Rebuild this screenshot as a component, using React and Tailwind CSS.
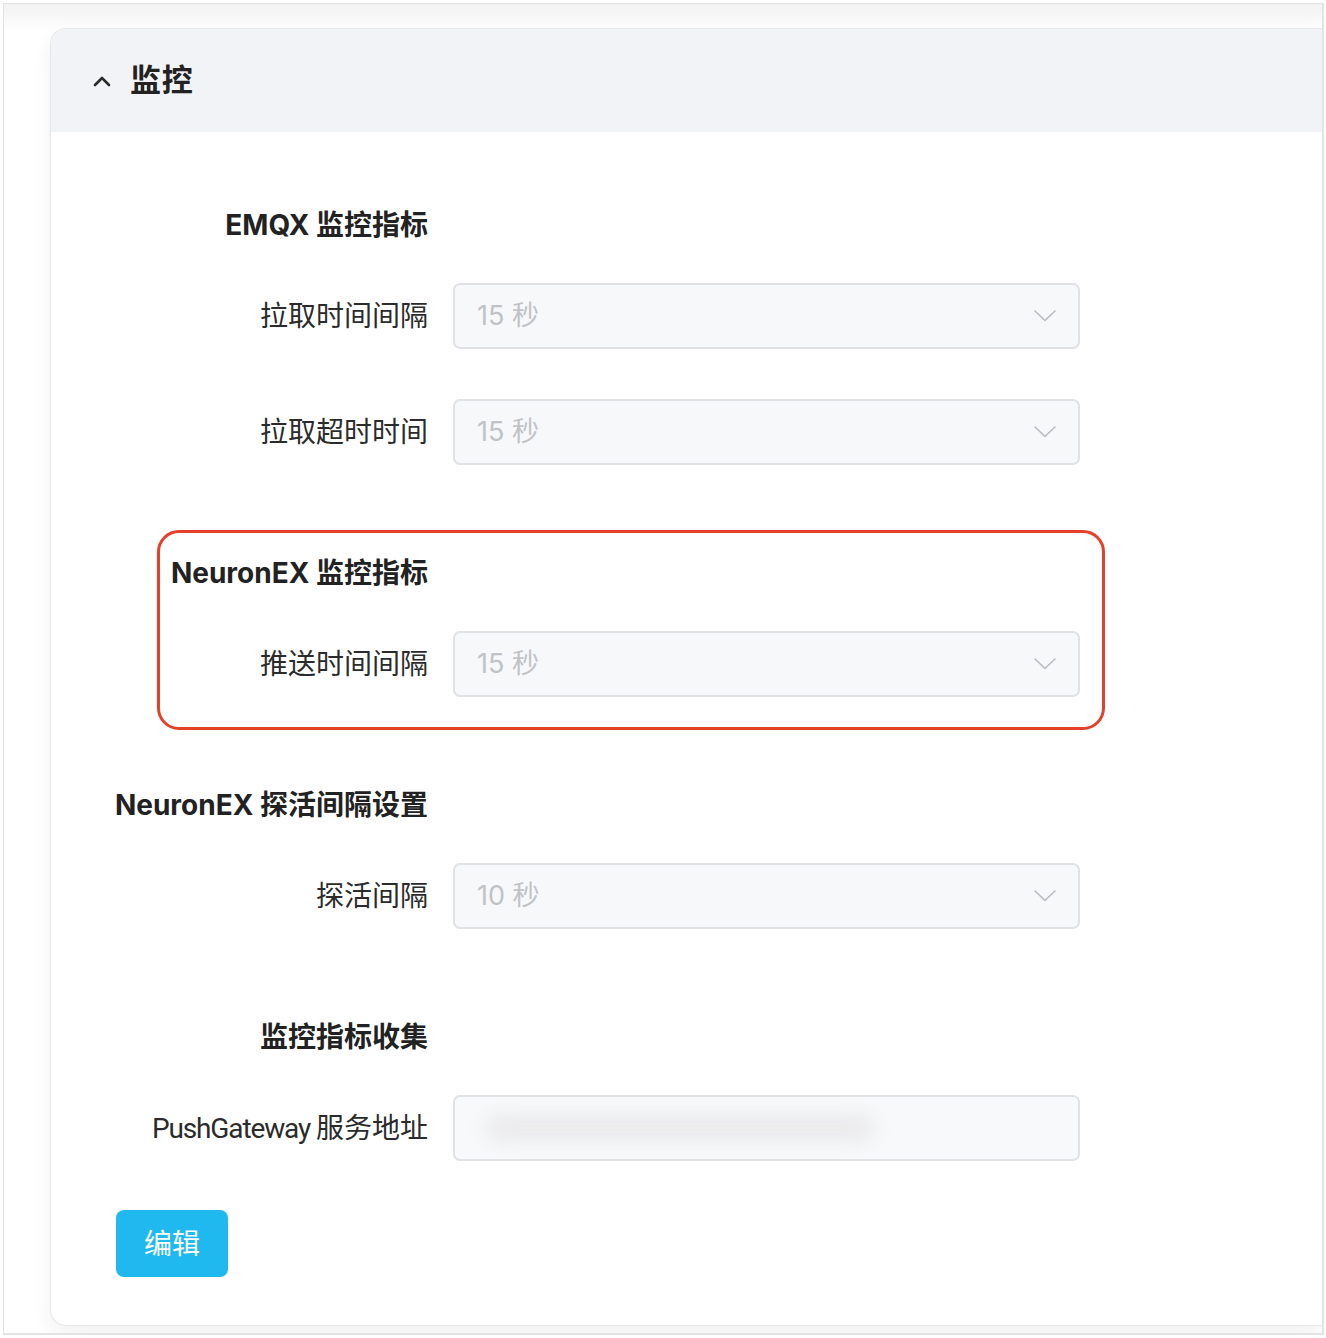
import { useState } from "react";

const FONT = { fontFamily: 'Inter, "Noto Sans CJK SC", sans-serif' };

function ChevronDown() {
  return (
    <svg width="22" height="12" viewBox="0 0 22 12" fill="none">
      <polyline points="1,1 11,10.5 21,1" stroke="#b9bcc2" strokeWidth="1.6" strokeLinejoin="round" strokeLinecap="round" />
    </svg>
  );
}

function ChevronUp() {
  return (
    <svg width="18" height="12" viewBox="0 0 18 12" fill="none">
      <polyline points="2,10 9,3 16,10" stroke="#2a2a2a" strokeWidth="2.6" strokeLinejoin="round" strokeLinecap="round" />
    </svg>
  );
}

function Heading({ children, className = "" }) {
  return (
    <div className={`flex ${className}`}>
      <div className="w-[312px] flex justify-end whitespace-nowrap text-[28px] leading-[40px] font-bold text-[#222]">
        <span>{children}</span>
      </div>
    </div>
  );
}

function SelectRow({ label, value, className = "" }) {
  return (
    <div className={`flex items-center gap-[25px] ${className}`}>
      <div className="w-[312px] flex justify-end whitespace-nowrap text-[28px] text-[#2b2b2b]">
        <span>{label}</span>
      </div>
      <div className="w-[627px] h-[66px] rounded-[7px] border-2 border-[#e1e2e6] bg-[#f7f8fa] flex items-center justify-between pl-[22px] pr-[22px]">
        <span className="text-[27px] text-[#c0c2c6]">{value}</span>
        <ChevronDown />
      </div>
    </div>
  );
}

export default function App() {
  const [open, setOpen] = useState(true);

  return (
    <div className="bg-white w-[1326px] h-[1338px] pt-[3px] pl-[3px]" style={FONT}>
      <div className="w-[1321px] h-[1332px] border border-[#e3e3e3] border-r-2 border-b-2 pt-[24px] pl-[46px] overflow-hidden bg-gradient-to-b from-[#f1f1f1] via-white via-[2%] to-white">
        <div className="h-[1298px] rounded-l-[16px] border border-r-0 border-[#e6e7ea] bg-white shadow-[0_8px_20px_rgba(0,0,0,0.06)] flex flex-col overflow-hidden">
          <div
            className="h-[103px] rounded-tl-[16px] bg-[#f2f3f6] flex items-center pl-[42px] gap-[19px] cursor-pointer"
            onClick={() => setOpen(!open)}
          >
            <ChevronUp />
            <span className="text-[31px] font-bold text-[#222] tracking-wide">监控</span>
          </div>

          <div className="pl-[65px] pt-[73px] flex flex-col w-[1029px]">
            <Heading>EMQX 监控指标</Heading>
            <SelectRow label="拉取时间间隔" value="15 秒" className="mt-[38px]" />
            <SelectRow label="拉取超时时间" value="15 秒" className="mt-[50px]" />

            <div className="relative mt-[88px]">
              <div className="absolute -top-[23px] -bottom-[33px] left-[41px] -right-[25px] rounded-[22px] border-[3px] border-[#e5412a] pointer-events-none" />
              <Heading>NeuronEX 监控指标</Heading>
              <SelectRow label="推送时间间隔" value="15 秒" className="mt-[38px]" />
            </div>

            <Heading className="mt-[88px]">NeuronEX 探活间隔设置</Heading>
            <SelectRow label="探活间隔" value="10 秒" className="mt-[38px]" />

            <Heading className="mt-[88px]">监控指标收集</Heading>
            <div className="flex items-center gap-[25px] mt-[38px]">
              <div className="w-[312px] flex justify-end whitespace-nowrap text-[28px] text-[#2b2b2b]">
                <span>
                  <span className="font-['Roboto'] tracking-[-0.04em]">PushGateway </span>服务地址
                </span>
              </div>
              <div className="w-[627px] h-[66px] rounded-[7px] border-2 border-[#e1e2e6] bg-[#f8f9fa] flex items-center pl-[30px] overflow-hidden">
                <div className="w-[390px] h-[30px] rounded-full bg-[#ebebed] blur-[9px]" />
              </div>
            </div>

            <button className="mt-[49px] w-[112px] h-[67px] rounded-[8px] bg-[#20b9ef] text-white text-[28px]">
              编辑
            </button>
          </div>
        </div>
      </div>
    </div>
  );
}
